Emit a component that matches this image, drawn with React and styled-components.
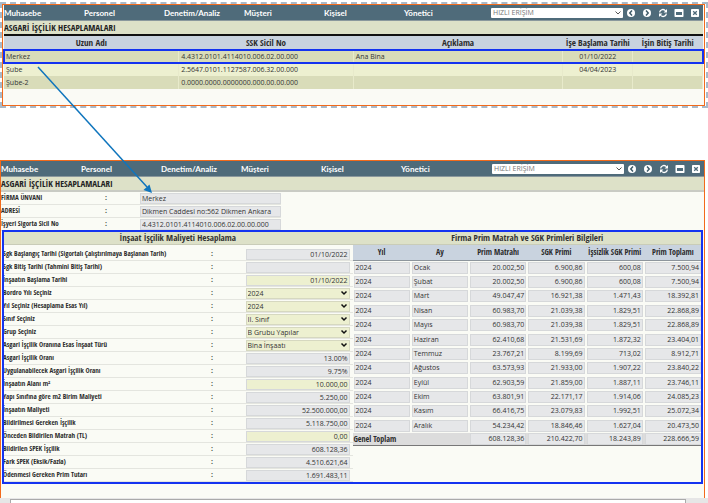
import React from "react";
import styled, { createGlobalStyle } from "styled-components";

const menu = ["Muhasebe", "Personel", "Denetim/Analiz", "Müşteri", "Kişisel", "Yönetici"];

const branches = [
  { name: "Merkez", sicil: "4.4312.0101.4114010.006.02.00.000", note: "Ana Bina", start: "01/10/2022", end: "" },
  { name: "Şube", sicil: "2.5647.0101.1127587.006.32.00.000", note: "", start: "04/04/2023", end: "" },
  { name: "Şube-2", sicil: "0.0000.0000.0000000.000.00.00.000", note: "", start: "", end: "" },
];

const company = [
  { id: "unvan", label: "FİRMA ÜNVANI", value: "Merkez" },
  { id: "adres", label: "ADRESİ", value: "Dikmen Caddesi no:562 Dikmen Ankara" },
  { id: "sicil", label: "İşyeri Sigorta Sicil No", value: "4.4312.0101.4114010.006.02.00.00.000" },
];

const fields = [
  { id: "sgk-bas", label: "Sgk Başlangıç Tarihi (Sigortalı Çalıştırılmaya Başlanan Tarih)", value: "01/10/2022" },
  { id: "sgk-bit", label: "Sgk Bitiş Tarihi (Tahmini Bitiş Tarihi)", value: "" },
  { id: "ins-bas", label: "İnşaatın Başlama Tarihi", value: "01/10/2022", editable: true },
  { id: "bordro", label: "Bordro Yılı Seçiniz", value: "2024", select: true },
  { id: "yil", label: "Yıl Seçiniz (Hesaplama Esas Yıl)", value: "2024", select: true },
  { id: "sinif", label: "Sınıf Seçiniz", value: "II. Sınıf", select: true },
  { id: "grup", label: "Grup Seçiniz", value: "B Grubu Yapılar", select: true },
  { id: "tur", label: "Asgari İşçilik Oranına Esas İnşaat Türü", value: "Bina İnşaatı", select: true },
  { id: "oran", label: "Asgari İşçilik Oranı", value: "13.00%" },
  { id: "uyg-oran", label: "Uygulanabilecek Asgari İşçilik Oranı", value: "9.75%" },
  { id: "alan", label: "İnşaatın Alanı m²", value: "10.000,00", editable: true },
  { id: "birim", label: "Yapı Sınıfına göre m2 Birim Maliyeti", value: "5.250,00" },
  { id: "maliyet", label: "İnşaatın Maliyeti", value: "52.500.000,00" },
  { id: "gereken", label: "Bildirilmesi Gereken İşçilik", value: "5.118.750,00" },
  { id: "onceden", label: "Önceden Bildirilen Matrah (TL)", value: "0,00", editable: true },
  { id: "spek", label: "Bildirilen SPEK İşçilik", value: "608.128,36" },
  { id: "fark", label: "Fark SPEK (Eksik/Fazla)", value: "4.510.621,64" },
  { id: "odenmesi", label: "Ödenmesi Gereken Prim Tutarı", value: "1.691.483,11" },
];

const months = [
  ["Ocak", "20.002,50", "6.900,86", "600,08", "7.500,94"],
  ["Şubat", "20.002,50", "6.900,86", "600,08", "7.500,94"],
  ["Mart", "49.047,47", "16.921,38", "1.471,43", "18.392,81"],
  ["Nisan", "60.983,70", "21.039,38", "1.829,51", "22.868,89"],
  ["Mayıs", "60.983,70", "21.039,38", "1.829,51", "22.868,89"],
  ["Haziran", "62.410,68", "21.531,69", "1.872,32", "23.404,01"],
  ["Temmuz", "23.767,21", "8.199,69", "713,02", "8.912,71"],
  ["Ağustos", "63.573,93", "21.933,00", "1.907,22", "23.840,22"],
  ["Eylül", "62.903,59", "21.859,00", "1.887,11", "23.746,11"],
  ["Ekim", "63.801,91", "22.171,17", "1.914,06", "24.085,23"],
  ["Kasım", "66.416,75", "23.079,83", "1.992,51", "25.072,34"],
  ["Aralık", "54.234,42", "18.846,46", "1.627,04", "20.473,50"],
];

const totals = ["608.128,36", "210.422,70", "18.243,89", "228.666,59"];

const Toolbar = () => (
  <Bar>
    <Nav>
      {menu.map((item) => (
        <NavLink href="#" key={item}>
          {item}
        </NavLink>
      ))}
    </Nav>
    <Tools>
      <QuickBox>
        <QuickSelect aria-label="Hızlı erişim">
          <option>HIZLI ERİŞİM</option>
        </QuickSelect>
        <Chevron thin />
      </QuickBox>
      <IconButton aria-label="Geri">
        <svg viewBox="0 0 10 10">
          <circle cx="5" cy="5" r="4" fill="#fff" />
          <path d="M6 2.6 3.8 5 6 7.4" fill="none" stroke="#3f5b69" strokeWidth="1.5" />
        </svg>
      </IconButton>
      <IconButton aria-label="İleri">
        <svg viewBox="0 0 10 10">
          <circle cx="5" cy="5" r="4" fill="#fff" />
          <path d="M4 2.6 6.2 5 4 7.4" fill="none" stroke="#3f5b69" strokeWidth="1.5" />
        </svg>
      </IconButton>
      <IconButton aria-label="Yenile">
        <svg viewBox="0 0 10 10">
          <path d="M1.6 4.4A3.3 3.3 0 0 1 7.6 3M8.4 5.6A3.3 3.3 0 0 1 2.4 7" fill="none" stroke="#fff" strokeWidth="1.3" />
          <path d="M9 1v3.4H5.6zM1 9V5.6h3.4z" fill="#fff" />
        </svg>
      </IconButton>
      <IconButton aria-label="Pencere">
        <svg viewBox="0 0 10 10">
          <rect x="0.500" y="1" width="9" height="8" rx="0.8" fill="#fff" />
          <rect x="2" y="4" width="6" height="3" fill="#4f6b7a" />
        </svg>
      </IconButton>
      <IconButton aria-label="Kapat">
        <svg viewBox="0 0 10 10">
          <rect x="1" y="1" width="8" height="8" rx="0.8" fill="#fff" />
          <path d="M3.2 3.2l3.6 3.6M6.8 3.2 3.2 6.8" stroke="#4f6b7a" strokeWidth="1.3" />
        </svg>
      </IconButton>
    </Tools>
  </Bar>
);

const Chevron = ({ thin }) => (
  <ChevronSvg viewBox="0 0 8 6">
    <path d="M1.500 1.500 4 4l2.500-2.500" fill="none" stroke={thin ? "#555" : "#111"} strokeWidth={thin ? 1 : 1.5} />
  </ChevronSvg>
);

const Field = ({ id, label, value, select, editable }) => (
  <FormRow>
    <label htmlFor={id}>{label}</label>
    <Colon>:</Colon>
    {select ? (
      <SelectBox>
        <FieldSelect id={id}>
          <option>{value}</option>
        </FieldSelect>
        <Chevron />
      </SelectBox>
    ) : (
      <TextInput id={id} defaultValue={value} readOnly={!editable} $editable={editable} $align="right" />
    )}
  </FormRow>
);

const App = () => {
  return (
    <Page>
      <GlobalStyle />
      <ListFrame>
        <ListWindow>
          <Toolbar />
          <Title $line="#111">ASGARİ İŞÇİLİK HESAPLAMALARI</Title>
          <BranchTable>
            <colgroup>
              <col width="25%" />
              <col width="25%" />
              <col width="30%" />
              <col width="10%" />
              <col width="10%" />
            </colgroup>
            <thead>
              <tr>
                <th>Uzun Adı</th>
                <th>SSK Sicil No</th>
                <th>Açıklama</th>
                <th>İşe Başlama Tarihi</th>
                <th>İşin Bitiş Tarihi</th>
              </tr>
            </thead>
            <tbody>
              {branches.map((b, index) => (
                <BranchRow key={b.name} $selected={index === 0}>
                  <td>{b.name}</td>
                  <td>{b.sicil}</td>
                  <td>{b.note}</td>
                  <td>{b.start}</td>
                  <td>{b.end}</td>
                </BranchRow>
              ))}
            </tbody>
          </BranchTable>
        </ListWindow>
      </ListFrame>

      <Arrow viewBox="0 0 120 132">
        <path d="M2 2 111 122" stroke="#0f75bd" strokeWidth="1.5" />
        <path d="M116 128l-8.500-3 6-5.500z" fill="#0f75bd" />
      </Arrow>

      <DetailWindow>
        <Toolbar />
        <Title $line="#c9cbc4">ASGARİ İŞÇİLİK HESAPLAMALARI</Title>
        <Company>
          {company.map((c) => (
            <CompanyRow key={c.id}>
              <label htmlFor={c.id}>{c.label}</label>
              <Colon>:</Colon>
              <TextInput id={c.id} defaultValue={c.value} readOnly />
            </CompanyRow>
          ))}
        </Company>
        <Panels>
          <Panel>
            <PanelTitle>İnşaat İşçilik Maliyeti Hesaplama</PanelTitle>
            <Form>
              {fields.map((f) => (
                <Field key={f.id} {...f} />
              ))}
            </Form>
          </Panel>
          <Panel>
            <PanelTitle>Firma Prim Matrah ve SGK Primleri Bilgileri</PanelTitle>
            <PrimTable>
              <thead>
                <tr>
                  <th>Yıl</th>
                  <th>Ay</th>
                  <th>Prim Matrahı</th>
                  <th>SGK Primi</th>
                  <th>İşsizlik SGK Primi</th>
                  <th>Prim Toplamı</th>
                </tr>
              </thead>
              <tbody>
                {months.map(([month, ...amounts]) => (
                  <tr key={month}>
                    <td>
                      <Cell>2024</Cell>
                    </td>
                    <td>
                      <Cell>{month}</Cell>
                    </td>
                    {amounts.map((a, i) => (
                      <td key={i}>
                        <Cell $align="right">{a}</Cell>
                      </td>
                    ))}
                  </tr>
                ))}
              </tbody>
              <tfoot>
                <tr>
                  <th colSpan={2}>Genel Toplam</th>
                  {totals.map((t) => (
                    <td key={t}>
                      <Cell $align="right">{t}</Cell>
                    </td>
                  ))}
                </tr>
              </tfoot>
            </PrimTable>
          </Panel>
        </Panels>
      </DetailWindow>
      <Footer>
        <FooterBox />
      </Footer>
    </Page>
  );
};

export default App;

const GlobalStyle = createGlobalStyle`
  * {
    box-sizing: border-box;
  }

  body {
    margin: 0;
    background: #fff;
    color: #333;
    font-family: "Open Sans", "Noto Sans", sans-serif;
    font-size: 7px;
    line-height: 10px;
    overflow: hidden;
  }

  input, select, button {
    font: inherit;
    color: inherit;
    margin: 0;
    min-width: 0;
  }

  table {
    width: 100%;
    table-layout: fixed;
  }

  th, label {
    font-family: "Open Sans Condensed", "Open Sans", sans-serif;
    font-weight: 700;
    color: #2b2b2b;
    white-space: nowrap;
  }
`;

const Page = styled.main`
  position: relative;
`;

const ListFrame = styled.section`
  margin-top: 2px;
  padding-right: 1px;
  border: 2px dashed #a9b9c9;
`;

const ListWindow = styled.div`
  min-height: 102px;
  background: #fafaf5;
  border: 1px solid #f26a1b;
  padding: 0 1px;
`;

const DetailWindow = styled.section`
  margin: 52px 3px 0 0;
  background: #fafbf5;
  border: 1px solid #f26a1b;
  border-bottom: none;
  padding-bottom: 14px;
`;

const Bar = styled.header`
  display: flex;
  align-items: center;
  height: 16px;
  background: #4f6b7a;
  border-bottom: 1px solid #8a989d;
`;

const Nav = styled.nav`
  flex: 1;
  display: flex;
`;

const NavLink = styled.a`
  width: 80px;
  font-family: Lato, "Open Sans", sans-serif;
  font-weight: 700;
  font-size: 8px;
  color: #fff;
  text-decoration: none;
`;

const Tools = styled.div`
  display: flex;
  align-items: center;
  gap: 6px;
  padding-right: 3px;
`;

const QuickBox = styled.div`
  display: flex;
  align-items: center;
  width: 132px;
  height: 10px;
  background: #fff;
  border-radius: 1px;
  margin-right: -3px;
  padding-right: 1px;
`;

const QuickSelect = styled.select`
  flex: 1;
  height: 10px;
  padding: 0 2px;
  border: none;
  background: none;
  appearance: none;
  color: #777;
`;

const ChevronSvg = styled.svg`
  width: 8px;
  height: 6px;
  flex: none;
`;

const IconButton = styled.button`
  display: flex;
  width: 10px;
  height: 10px;
  padding: 0;
  border: none;
  background: none;
`;

const Title = styled.h1`
  margin: 0;
  height: 15px;
  background: #dde1c8;
  border-bottom: 2px solid ${({ $line }) => $line};
  font-family: "Open Sans Condensed", "Open Sans", sans-serif;
  font-weight: 700;
  font-size: 9px;
  line-height: 13px;
  color: #222;
`;

const BranchTable = styled.table`
  border-collapse: collapse;

  th {
    height: 14px;
    padding: 0;
    background: #c9d3df;
    font-size: 9px;
  }

  td {
    height: 13px;
    padding: 0 2px;
    border-right: 1px solid #e8eacb;
    white-space: nowrap;
  }

  td:nth-child(4) {
    text-align: center;
  }
`;

const BranchRow = styled.tr`
  background: #d9dcb9;
  outline: ${({ $selected }) => ($selected ? "2px solid #1433f0" : "none")};
  outline-offset: -1px;

  &:nth-child(even) {
    background: #edf0d0;
  }
`;

const Arrow = styled.svg`
  position: absolute;
  top: 63px;
  left: 36px;
  width: 120px;
  height: 132px;
`;

const Company = styled.div`
  width: 280px;
`;

const CompanyRow = styled.div`
  display: grid;
  grid-template-columns: 104px 35px 1fr;
  align-items: center;
  height: 13px;
  border-bottom: 1px solid #e4e5df;
`;

const Colon = styled.span`
  font-weight: 700;
`;

const TextInput = styled.input`
  width: 100%;
  height: 11px;
  padding: 0 1px;
  border: 1px solid #d6d8da;
  background: ${({ $editable }) => ($editable ? "#edf0d0" : "#e6e7e9")};
  text-align: ${({ $align }) => $align || "left"};
`;

const Panels = styled.div`
  display: grid;
  grid-template-columns: 1fr 1fr;
  margin: -1px 1px 0;
  padding: 2px 1px;
  outline: 2px solid #1433f0;
  outline-offset: -2px;
`;

const Panel = styled.section`
  min-width: 0;
`;

const PanelTitle = styled.h2`
  margin: 0;
  height: 13px;
  background: #dde1c8;
  border-bottom: 1px solid #c9ccb8;
  text-align: center;
  font-family: "Open Sans Condensed", "Open Sans", sans-serif;
  font-weight: 700;
  font-size: 9px;
  line-height: 12px;
  color: #333;
`;

const Form = styled.div`
  padding-top: 3px;
`;

const FormRow = styled.div`
  display: grid;
  grid-template-columns: 6fr 1fr 3fr;
  align-items: center;
  height: 13px;
  padding-right: 3px;
  border-bottom: 1px solid #e4e5df;
`;

const SelectBox = styled.div`
  display: flex;
  align-items: center;
  height: 11px;
  padding-right: 1px;
  border: 1px solid #d6d8c0;
  background: #edf0d0;
`;

const FieldSelect = styled.select`
  flex: 1;
  height: 9px;
  padding: 0 1px;
  border: none;
  background: none;
  appearance: none;
`;

const PrimTable = styled.table`
  height: 201px;
  border-collapse: collapse;

  thead th {
    height: 15px;
    padding: 0;
    background: #c9d3df;
    border-bottom: 1px solid #8d959c;
    font-size: 8px;
  }

  td {
    padding: 0 1px;
  }

  tfoot {
    background: #dcdcdc;
    border-bottom: 1px solid #777;
  }

  tfoot th {
    padding: 0 1px;
    text-align: left;
    font-size: 8px;
  }
`;

const Cell = styled.div`
  height: 12px;
  padding: 0 1px;
  border: 1px solid #d6d8da;
  background: #e6e7e9;
  text-align: ${({ $align }) => $align || "left"};
`;

const Footer = styled.footer`
  background: #e6e6e6;
  padding: 1px 22px 0 10px;
`;

const FooterBox = styled.div`
  height: 12px;
  background: #fff;
  border: 1px solid #aaa;
`;
